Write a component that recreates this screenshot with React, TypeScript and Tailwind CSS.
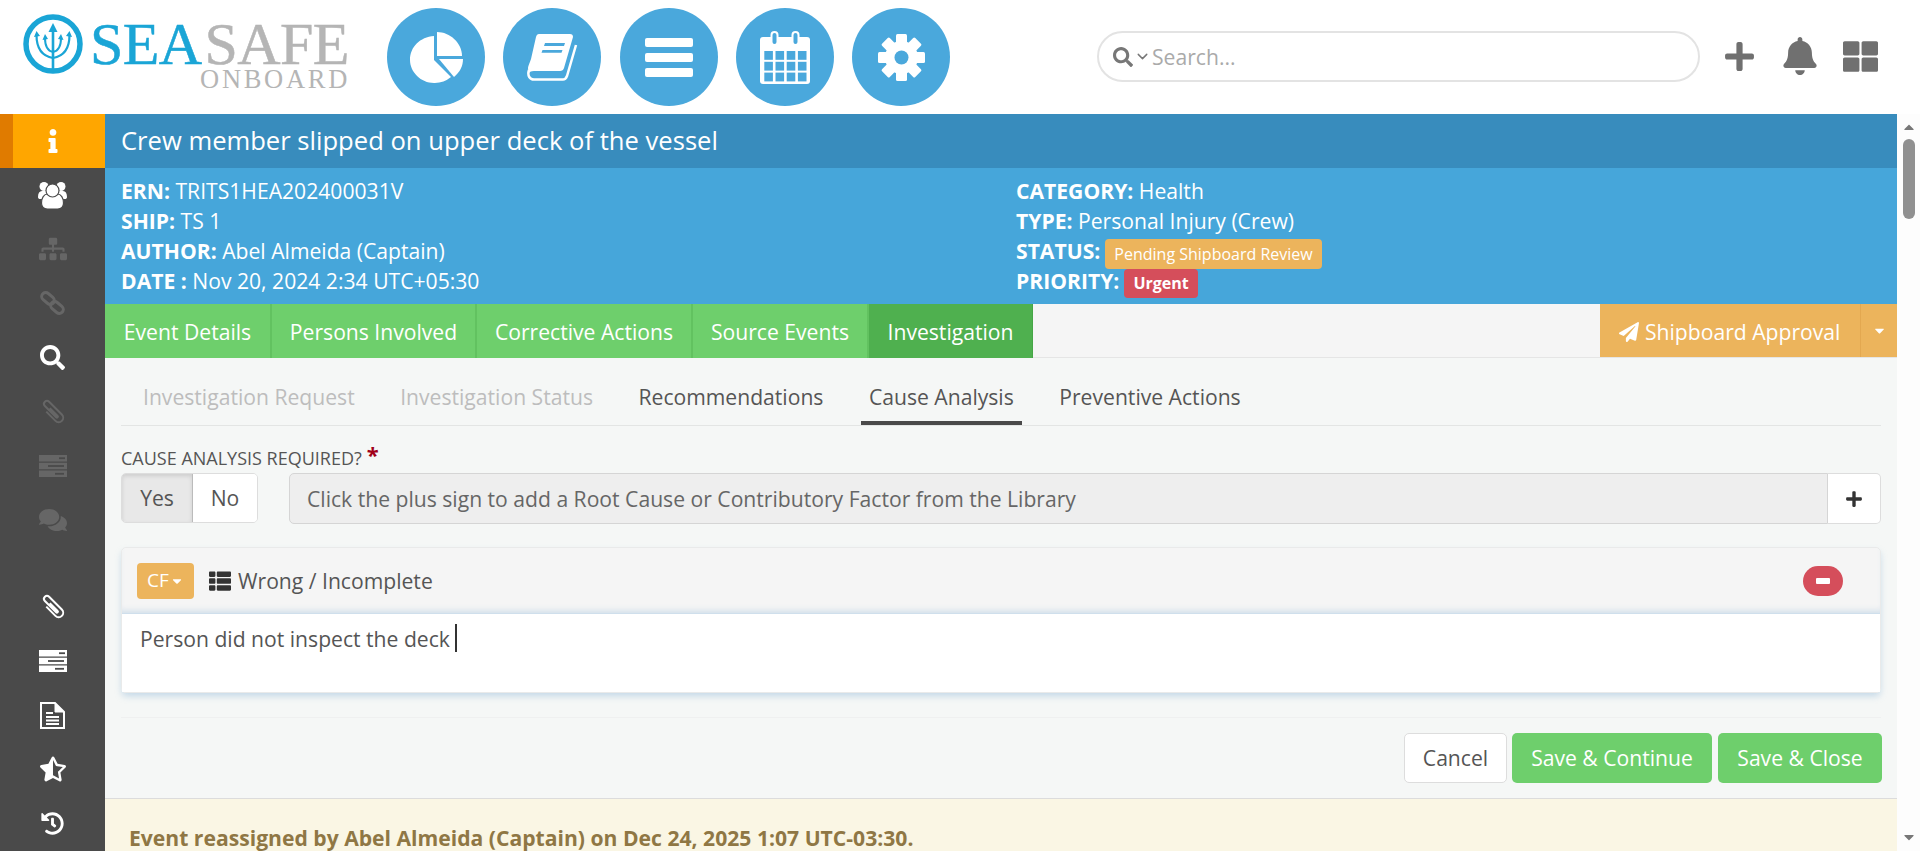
import React from "react";
import {
  FaBell,
  FaCaretDown,
  FaCaretUp,
  FaComments,
  FaHistory,
  FaInfo,
  FaPaperPlane,
  FaPlus,
  FaSearch,
  FaSitemap,
  FaStarHalfAlt,
  FaThLarge,
  FaThList,
} from "react-icons/fa";
import { ChevronDown } from "lucide-react";

const BLUE = "#4aa8dc";
const SIDE = "#4a4a4a";
const DIM = "#666666";

const Logo = () => {
  return (
    <div className="flex items-start w-[340px] h-[90px] ml-[23px] mt-[14px] shrink-0">
      <svg width="60" height="60" viewBox="0 0 60 60" className="shrink-0" fill="none" stroke="#1aa5d6">
        <circle cx="30" cy="30" r="27" strokeWidth="5.5" />
        <path d="M30 17v38" strokeWidth="2.6" />
        <path d="M30 9l-4.5 9h9z" fill="#1aa5d6" stroke="none" />
        <path d="M13.5 21c0 13 5 21 16.5 23M46.5 21c0 13-5 21-16.5 23" strokeWidth="2.2" />
        <path d="M22 24c0 8 3 13 8 14M38 24c0 8-3 13-8 14" strokeWidth="2" />
        <path d="M11 23l2.5-6 3.5 5zM49 23l-2.500-6-3.500 5zM19.500 26l2.500-6 3 5zM40.500 26l-2.500-6-3 5z" fill="#1aa5d6" stroke="none" />
      </svg>
      <div className="ml-[7px] mt-[6px] w-[258px] font-['Liberation_Serif',serif]">
        <div className="text-[60px] leading-[48px] h-[48px] tracking-[-0.6px] whitespace-nowrap [-webkit-text-stroke:0.5px_currentColor]">
          <span className="text-[#1aa5d6]">SEA</span>
          <span className="text-[#b5b5b5] ml-[3px]">SAFE</span>
        </div>
        <div className="text-[26.5px] leading-[22px] h-[22px] text-[#b5b5b5] text-right tracking-[2.7px] -mr-[2px] whitespace-nowrap">
          ONBOARD
        </div>
      </div>
    </div>
  );
};

const PieIcon = () => (
  <svg width="53" height="51" viewBox="0 0 53 51" fill="#fff">
    <path d="M24 4v24l17 17a26 26 0 0 1-17 6C11 51 0 40 0 28 0 15 10 5 24 4z" />
    <path d="M27 0c13 0 25 11 25 24H27z" />
    <path d="M29 27h24c0 7-3 13-9 18z" />
  </svg>
);

const BookIcon = () => (
  <svg width="51" height="47" viewBox="0 0 51 47">
    <path d="M12 0h31c2 0 3 1 3 3l-9 31c-.5 2-2 3-4 3H7c-3 0-5 1-5.500 3L1 34c0-2 2-6 3-9L9 3c.5-2 1.500-3 3-3z" fill="#fff" />
    <path d="M2 36c-2 6 1 9.500 5 9.500h29c2 0 3-1 4-3.500l9-31" fill="none" stroke="#fff" strokeWidth="2.5" />
    <path d="M18 9h20l-1 3H17zM15.500 16H35.500l-1 2.700h-20z" fill={BLUE} />
  </svg>
);

const CalendarIcon = () => {
  const cells = [];
  for (let r = 0; r < 3; r++) {
    for (let c = 0; c < 4; c++) {
      cells.push(<rect key={`${r}-${c}`} x={4.3 + c * 11.2} y={20 + r * 10.8} width="8.600" height="8.800" fill={BLUE} />);
    }
  }
  return (
    <svg width="50" height="53" viewBox="0 0 50 53">
      <rect x="0" y="6" width="50" height="47" rx="3" fill="#fff" />
      {cells}
      <rect x="11.500" y="1" width="6" height="13" rx="3" fill={BLUE} stroke="#fff" strokeWidth="2" />
      <rect x="32.500" y="1" width="6" height="13" rx="3" fill={BLUE} stroke="#fff" strokeWidth="2" />
    </svg>
  );
};

const GearIcon = () => (
  <svg width="47" height="47" viewBox="0 0 47 47">
    {[0, 45, 90, 135, 180, 225, 270, 315].map((a) => (
      <rect key={a} x="18" y="0" width="11" height="12" rx="1.500" fill="#fff" transform={`rotate(${a} 23.500 23.500)`} />
    ))}
    <circle cx="23.500" cy="23.500" r="16.500" fill="#fff" />
    <circle cx="23.500" cy="23.500" r="7" fill={BLUE} />
  </svg>
);

const BarsIcon = () => (
  <div className="flex flex-col gap-[6px]">
    <div className="w-[48px] h-[9px] rounded-[2px] bg-white" />
    <div className="w-[48px] h-[9px] rounded-[2px] bg-white" />
    <div className="w-[48px] h-[9px] rounded-[2px] bg-white" />
  </div>
);

const UsersIcon = () => (
  <svg width="29" height="27" viewBox="0 0 29 27" fill="#fff">
    <circle cx="6" cy="4.500" r="4.500" />
    <circle cx="23" cy="4.500" r="4.500" />
    <path d="M0 15c0-4 1.500-6 4-6h5v8H2c-1 0-2-.5-2-2zM29 15c0-4-1.500-6-4-6h-5v8h7c1 0 2-.5 2-2z" />
    <path d="M3.500 21c0-5 2.500-9 6-9h10c3.500 0 6 4 6 9 0 4-2.500 6-6 6h-10c-3.500 0-6-2-6-6z" stroke={SIDE} strokeWidth="1.200" />
    <circle cx="14.500" cy="8.500" r="6.500" stroke={SIDE} strokeWidth="1.200" />
  </svg>
);

const LinkIcon = () => (
  <svg width="25" height="24" viewBox="0 0 25 24" fill="none" stroke={DIM} strokeWidth="3">
    <rect x="1" y="3.500" width="14" height="8" rx="4" transform="rotate(40 8 7.500)" />
    <rect x="10" y="12.500" width="14" height="8" rx="4" transform="rotate(40 17 16.500)" />
  </svg>
);

const ClipIcon = ({ color }: { color: string }) => (
  <svg width="24" height="24" viewBox="0 0 24 24" fill="none" stroke={color} strokeWidth="2" className="overflow-visible">
    <path d="M7.500 7v13a4.500 4.500 0 0 0 9 0V2a3 3 0 0 0-6 0v16a1 1 0 0 0 2 0V7" transform="rotate(-45 12 12)" />
  </svg>
);

const TasksIcon = ({ color }: { color: string }) => (
  <svg width="28" height="22" viewBox="0 0 28 22">
    <rect x="0" y="0" width="28" height="6.500" fill={color} />
    <rect x="0" y="7.750" width="28" height="6.500" fill={color} />
    <rect x="0" y="15.500" width="28" height="6.500" fill={color} />
    <rect x="20" y="2.300" width="6" height="1.800" fill={SIDE} />
    <rect x="9" y="10.100" width="16" height="1.800" fill={SIDE} />
    <rect x="16" y="17.900" width="9" height="1.800" fill={SIDE} />
  </svg>
);

const FileIcon = () => (
  <svg width="25" height="27" viewBox="0 0 25 27" fill="none" stroke="#fff" strokeWidth="2">
    <path d="M1 1h14l9 9v16H1z" />
    <path d="M15 1v9h9z" fill="#fff" strokeWidth="1" />
    <path d="M6 11h7M6 15h13M6 18.500h13M6 22h13" strokeWidth="1.800" />
  </svg>
);

const navIcons = [<PieIcon key="pie" />, <BookIcon key="book" />, <BarsIcon key="bars" />, <CalendarIcon key="cal" />, <GearIcon key="gear" />];

const sideIcons = [
  <UsersIcon key="users" />,
  <FaSitemap key="map" className="text-[28px] text-[#666]" />,
  <LinkIcon key="link" />,
  <FaSearch key="search" className="text-[25px] text-white" />,
  <ClipIcon key="clip" color={DIM} />,
  <TasksIcon key="tasks" color={DIM} />,
  <FaComments key="comments" className="text-[28px] text-[#666]" />,
];

const sideIconsBottom = [
  <ClipIcon key="clip" color="#fff" />,
  <TasksIcon key="tasks" color="#fff" />,
  <FileIcon key="file" />,
  <FaStarHalfAlt key="star" className="text-[26px]" />,
  <FaHistory key="hist" className="text-[23px]" />,
];

const tabs = [
  { label: "Event Details", w: "w-[167px]" },
  { label: "Persons Involved", w: "w-[205px]" },
  { label: "Corrective Actions", w: "w-[216px]" },
  { label: "Source Events", w: "w-[176px]" },
];

const App = () => {
  return (
    <div className="w-[1920px] h-[851px] overflow-hidden flex flex-col bg-white font-['Open_Sans',sans-serif] text-[21.13px] text-[#555]">
      {/* header */}
      <div className="h-[114px] flex shrink-0">
        <Logo />
        <div className="flex gap-[18.25px] mt-[8px] ml-[24px]">
          {navIcons.map((icon, i) => (
            <div key={i} className="w-[98px] h-[98px] rounded-full bg-[#4aa8dc] flex items-center justify-center">
              {icon}
            </div>
          ))}
        </div>
        <div className="w-[603px] h-[51px] mt-[31px] ml-[147px] rounded-full border-2 border-[#e3e3e3] flex items-center pl-[14px]">
          <FaSearch className="text-[20px] text-[#777]" />
          <ChevronDown size={17} strokeWidth={2} className="text-[#777] ml-[1px]" />
          <span className="ml-[1px] text-[#aaa]">Search...</span>
        </div>
        <div className="flex items-center text-[#707070] h-[114px] -mt-[1px]">
          <FaPlus className="text-[33px] ml-[23px]" />
          <FaBell className="text-[38px] ml-[25px]" />
          <FaThLarge className="text-[35px] ml-[24px]" />
        </div>
      </div>

      <div className="flex-1 flex min-h-0">
        {/* sidebar */}
        <div className="w-[105px] bg-[#4a4a4a] shrink-0 flex flex-col">
          <div className="h-[54px] flex bg-[#ffa600] shrink-0">
            <div className="w-[13px] bg-[#e07b00]" />
            <div className="w-[79px] flex items-center justify-center text-white">
              <FaInfo className="text-[24px]" />
            </div>
          </div>
          <div className="flex flex-col">
            {sideIcons.map((icon, i) => (
              <div key={i} className="h-[54.2px] flex items-center justify-center">
                {icon}
              </div>
            ))}
          </div>
          <div className="flex flex-col mt-[32.5px]">
            {sideIconsBottom.map((icon, i) => (
              <div key={i} className="h-[54.2px] flex items-center justify-center text-white">
                {icon}
              </div>
            ))}
          </div>
        </div>

        {/* main */}
        <div className="w-[1792px] flex flex-col bg-[#f5f7f6] shrink-0">
          <div className="h-[54px] bg-[#388cbd] pl-[16px] flex items-center text-[25.6px] text-white shrink-0">
            Crew member slipped on upper deck of the vessel
          </div>
          <div className="h-[136px] bg-[#46a6da] pl-[16px] pt-[8px] flex text-white leading-[30px] shrink-0">
            <div className="w-[895px]">
              <div><b className="font-bold">ERN:</b> TRITS1HEA202400031V</div>
              <div><b className="font-bold">SHIP:</b> TS 1</div>
              <div><b className="font-bold">AUTHOR:</b> Abel Almeida (Captain)</div>
              <div><b className="font-bold">DATE :</b> Nov 20, 2024 2:34 UTC+05:30</div>
            </div>
            <div>
              <div><b className="font-bold">CATEGORY:</b> Health</div>
              <div><b className="font-bold">TYPE:</b> Personal Injury (Crew)</div>
              <div className="flex items-start h-[30px]">
                <b className="font-bold">STATUS:</b>
                <span className="ml-[5px] mt-[3px] h-[30px] px-[9px] rounded-[4px] bg-[#ecb45c] text-[16px] leading-[30px] whitespace-nowrap">Pending Shipboard Review</span>
              </div>
              <div className="flex items-start h-[30px]">
                <b className="font-bold">PRIORITY:</b>
                <span className="ml-[5px] mt-[3px] h-[29px] px-[9px] rounded-[4px] bg-[#d54e5b] text-[16px] font-bold leading-[29px]">Urgent</span>
              </div>
            </div>
          </div>
          <div className="h-[54px] flex bg-[#f5f5f5] text-white border-b border-[#e5e5e5] shrink-0">
            {tabs.map((t) => (
              <div key={t.label} className={`${t.w} pt-[2px] h-[54px] flex items-center justify-center bg-[#6ecf6c] border-r-2 border-[#62c260] whitespace-nowrap`}>
                {t.label}
              </div>
            ))}
            <div className="w-[164px] pt-[2px] h-[54px] flex items-center justify-center bg-[#4fb04f] border-r border-[#46a646]">Investigation</div>
            <div className="ml-auto h-[53px] flex bg-[#ecb45c]">
              <div className="w-[260px] pt-[2px] flex items-center pl-[19px] whitespace-nowrap">
                <FaPaperPlane className="text-[20px] mr-[6px]" />
                Shipboard Approval
              </div>
              <div className="w-[37px] border-l border-[#e3a850] flex items-center justify-center">
                <FaCaretDown className="text-[15px]" />
              </div>
            </div>
          </div>

          <div className="flex-1 flex flex-col px-[16px] min-h-0">
            {/* sub tabs */}
            <div className="h-[68px] flex items-end border-b border-[#e3e5e4] pl-[14px] shrink-0 gap-[29.5px]">
              <div className="px-[8px] h-[49px] leading-[41px] text-[#bdbdbd]">Investigation Request</div>
              <div className="px-[8px] h-[49px] leading-[41px] text-[#bdbdbd]">Investigation Status</div>
              <div className="px-[8px] h-[49px] leading-[41px]">Recommendations</div>
              <div className="px-[8px] h-[49px] leading-[41px] border-b-4 border-[#4a4a4a]">Cause Analysis</div>
              <div className="px-[8px] h-[49px] leading-[41px]">Preventive Actions</div>
            </div>
            <div className="mt-[20px] h-[27px] text-[18px] leading-[25px] flex shrink-0">
              CAUSE ANALYSIS REQUIRED?
              <span className="text-[#a00018] ml-[5px] text-[22px] font-bold leading-[16px]">*</span>
            </div>
            <div className="flex h-[51px] shrink-0">
              <div className="w-[137px] h-[50px] flex rounded-[5px] border border-[#ddd] overflow-hidden">
                <div className="w-[71px] bg-[#e8e8e8] border-r border-[#bbb] flex items-center justify-center shadow-[inset_0_2px_4px_rgba(0,0,0,0.12)]">Yes</div>
                <div className="flex-1 bg-white flex items-center justify-center">No</div>
              </div>
              <div className="ml-[31px] flex-1 bg-[#eee] border border-[#d5d5d5] rounded-l-[5px] flex items-center pl-[17px] text-[#666] whitespace-nowrap">
                Click the plus sign to add a Root Cause or Contributory Factor from the Library
              </div>
              <div className="w-[53px] bg-white border border-[#ddd] border-l-0 rounded-r-[5px] flex items-center justify-center text-[#333]">
                <FaPlus className="text-[18px]" />
              </div>
            </div>
            {/* panel */}
            <div className="mt-[23px] h-[146px] rounded-[5px] border border-[#e9eaea] flex flex-col shadow-[0_4px_7px_-1px_rgba(120,170,210,0.4)] shrink-0">
              <div className="h-[66px] bg-[#f5f5f5] flex items-center pl-[15px] pr-[37px] border-b border-[#cfdfec] rounded-t-[5px] shadow-[inset_0_-6px_6px_-4px_rgba(120,170,210,0.3)]">
                <div className="w-[57px] h-[36px] bg-[#ecb45c] rounded-[4px] text-white text-[19px] flex items-center justify-center">
                  CF
                  <FaCaretDown className="text-[14px] ml-[1px]" />
                </div>
                <FaThList className="text-[#333] text-[22px] ml-[15px] mr-[7px]" />
                Wrong / Incomplete
                <div className="ml-auto w-[40px] h-[30px] rounded-full bg-[#d54e5b] flex items-center justify-center">
                  <div className="w-[14px] h-[6px] rounded-[1px] bg-white" />
                </div>
              </div>
              <div className="flex-1 bg-white pl-[18px] pt-[9px] flex items-start">
                Person did not inspect the deck
                <span className="w-[2px] h-[28px] bg-[#333] ml-[5px] mt-[1px]" />
              </div>
            </div>
            <div className="mt-[24px] h-px bg-[#eff0f0] shrink-0" />
            <div className="mt-[15px] -mr-px flex justify-end gap-[5px] shrink-0">
              <div className="w-[103px] h-[50px] bg-white border border-[#ddd] rounded-[5px] flex items-center justify-center">Cancel</div>
              <div className="w-[200px] h-[50px] bg-[#6ecf6c] rounded-[5px] text-white flex items-center justify-center">Save &amp; Continue</div>
              <div className="w-[164px] h-[50px] bg-[#6ecf6c] rounded-[5px] text-white flex items-center justify-center ml-px">Save &amp; Close</div>
            </div>
          </div>
          <div className="h-[53px] bg-[#faf6e4] border-t border-[#dcdcdc] pl-[24px] pt-[25px] text-[#8f7744] font-bold leading-[27px] whitespace-nowrap shrink-0 overflow-hidden">
            Event reassigned by Abel Almeida (Captain) on Dec 24, 2025 1:07 UTC-03:30.
          </div>
        </div>

        {/* scrollbar */}
        <div className="flex-1 bg-[#fdfdfd] flex flex-col items-center text-[#777]">
          <FaCaretUp className="text-[16px] mt-[5px]" />
          <div className="w-[12px] h-[80px] rounded-full bg-[#909090] mt-[4px]" />
          <FaCaretDown className="text-[16px] mt-auto mb-[6px]" />
        </div>
      </div>
    </div>
  );
};

export default App;
